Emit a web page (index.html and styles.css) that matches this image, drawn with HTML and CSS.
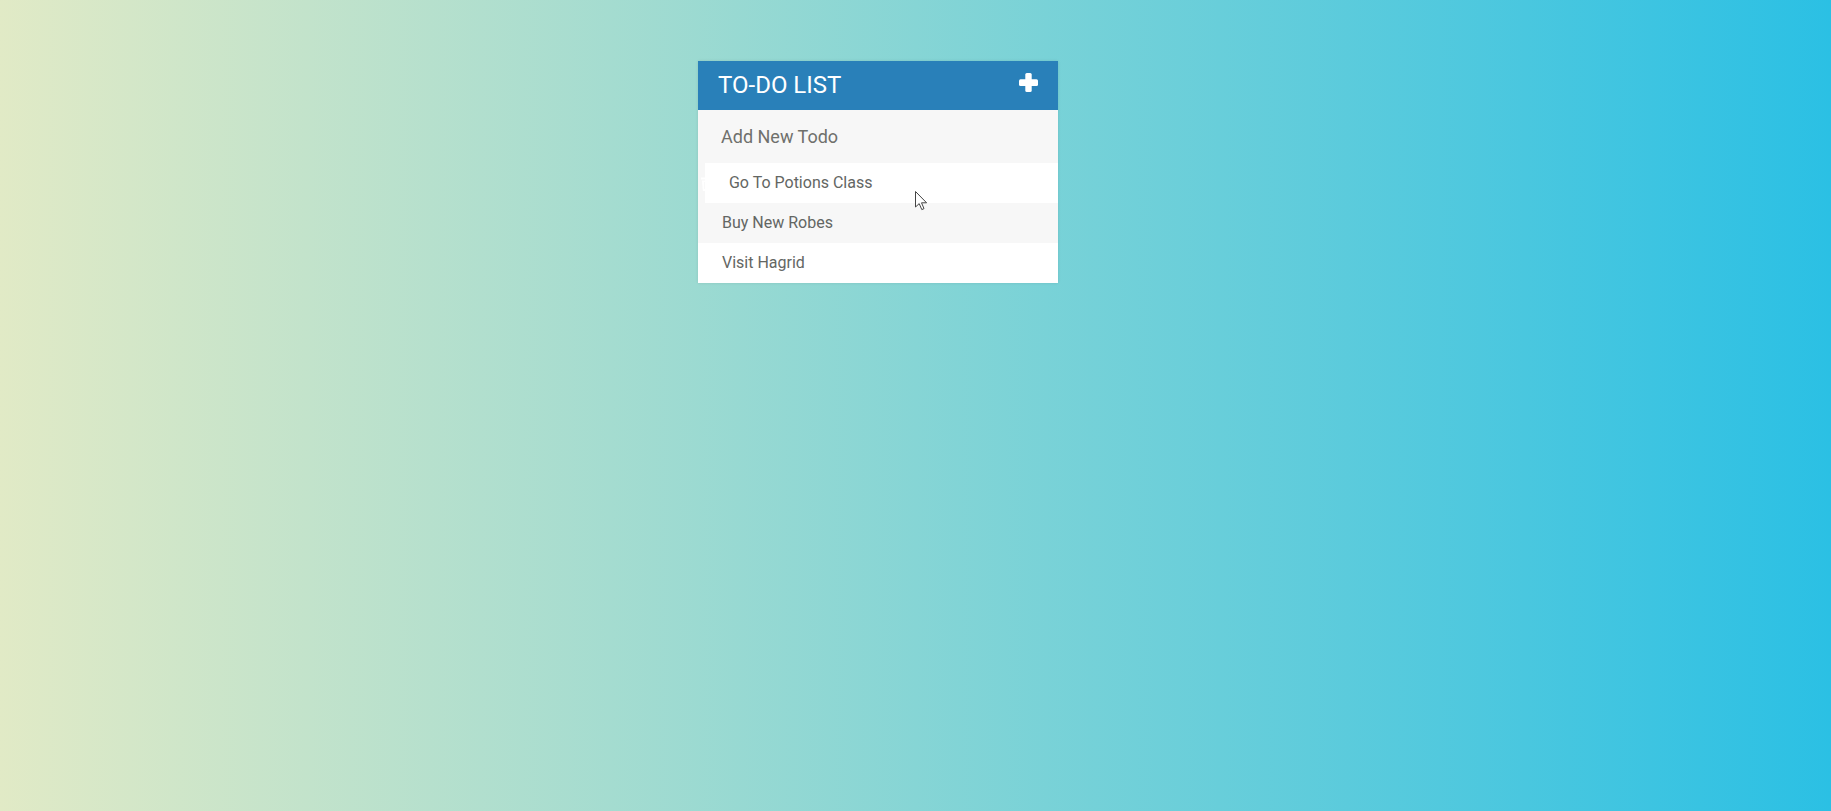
FILE: index.html
```
<!DOCTYPE html>
<html>
<head>
<meta charset="utf-8">
<title>Todo List</title>
<link rel="stylesheet" href="styles.css">
</head>
<body>
<div class="container">
  <h1 class="title">
    <span class="title-text">To-Do List</span>
    <svg class="plus" width="19" height="19" viewBox="0 0 19 19"><rect x="6.3" y="0" width="6.4" height="19" rx="1.5" fill="#fff"/><rect x="0" y="6.3" width="19" height="6.6" rx="1.5" fill="#fff"/></svg>
  </h1>
  <input class="new-todo" type="text" placeholder="Add New Todo">
  <ul class="todos">
    <li class="todo hover"><span class="del"><svg class="trash" width="12" height="15" viewBox="0 0 12 15"><rect x="0" y="1.5" width="12" height="2" fill="#fff"/><rect x="4" y="0" width="4" height="2" fill="#fff"/><path d="M1 4.5h10l-0.8 10.5h-8.4z" fill="#fff"/><rect x="3.3" y="6" width="1.2" height="7" fill="#f7f7f7"/><rect x="5.4" y="6" width="1.2" height="7" fill="#f7f7f7"/><rect x="7.5" y="6" width="1.2" height="7" fill="#f7f7f7"/></svg></span> Go To Potions Class</li>
    <li class="todo"><span class="del"></span> Buy New Robes</li>
    <li class="todo"><span class="del"></span> Visit Hagrid</li>
  </ul>
</div>
<svg class="cursor" width="13" height="20" viewBox="0 0 13 20"><path d="M0.5 0.5 L0.5 16 L4.2 12.6 L6.8 18.6 L9 17.6 L6.5 11.8 L11.6 11.8 Z" fill="#fff" stroke="#444" stroke-width="1" stroke-linejoin="round"/></svg>
</body>
</html>
```
FILE: styles.css
```
html, body {
  margin: 0;
  padding: 0;
  height: 100%;
}
body {
  font-family: Roboto, "Liberation Sans", sans-serif;
  background: linear-gradient(to left, #2bc0e4, #e1eac6);
  position: relative;
  overflow: hidden;
}
.container {
  width: 360px;
  margin: 61px 0 0 698px;
  background: #f7f7f7;
  box-shadow: 0 0 3px rgba(0, 0, 0, 0.1);
}
.title {
  margin: 0;
  background: #2980b9;
  color: #fff;
  padding: 10px 20px;
  font-size: 24px;
  line-height: 29px;
  font-weight: normal;
  text-transform: uppercase;
  display: flex;
  justify-content: space-between;
  align-items: flex-start;
}
.plus {
  margin-top: 2px;
  display: block;
}
.new-todo {
  display: block;
  font-family: Roboto, "Liberation Sans", sans-serif;
  font-size: 18px;
  line-height: 21px;
  height: 53px;
  background: #f7f7f7;
  width: 100%;
  padding: 13px 13px 13px 20px;
  box-sizing: border-box;
  color: #2980b9;
  border: 3px solid rgba(0, 0, 0, 0);
  outline: none;
  margin: 0;
}
.new-todo::placeholder {
  color: #6f706c;
}
.todos {
  list-style: none;
  margin: 0;
  padding: 0;
}
.todo {
  background: #fff;
  height: 40px;
  line-height: 40px;
  color: #636663;
  font-size: 16px;
  white-space: nowrap;
}
.todo:nth-child(2n) {
  background: #f7f7f7;
}
.del {
  display: inline-block;
  width: 0;
  height: 40px;
  margin-right: 20px;
  vertical-align: top;
  overflow: hidden;
  background: #f7f7f7;
  position: relative;
}
.todo.hover .del {
  width: 7px;
}
.trash {
  position: absolute;
  left: 3px;
  top: 13px;
}
.cursor {
  position: absolute;
  left: 915px;
  top: 191px;
}
```
